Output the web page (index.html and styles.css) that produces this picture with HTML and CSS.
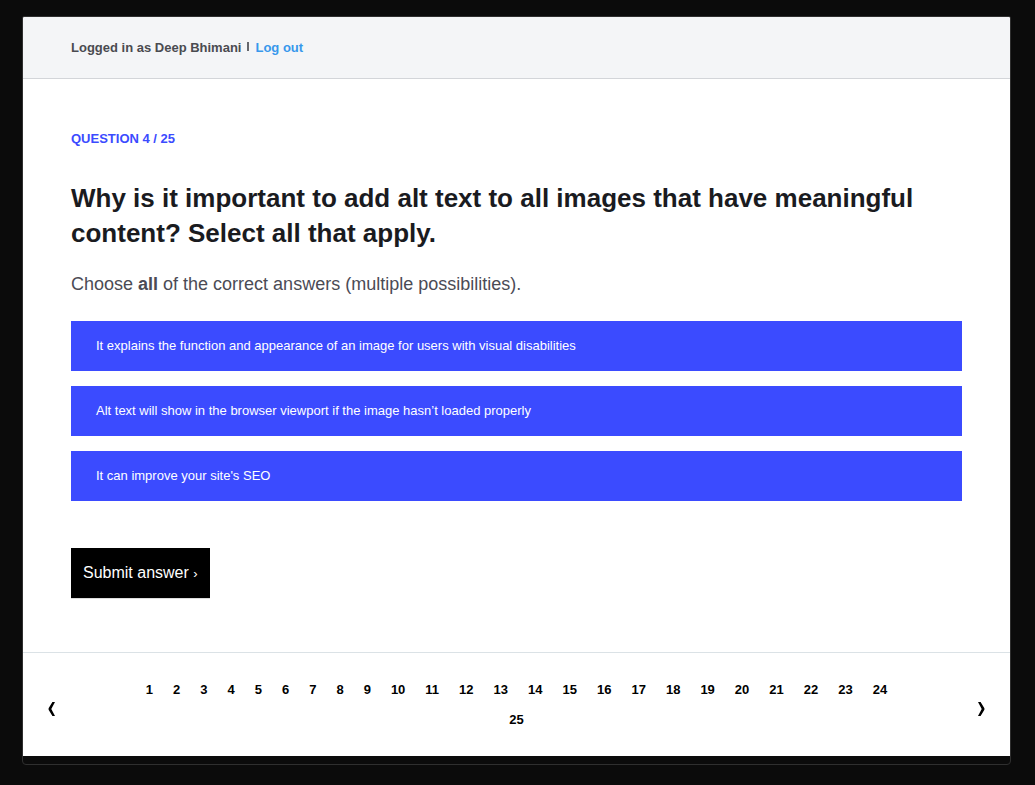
FILE: index.html
```html
<!DOCTYPE html>
<html lang="en">
<head>
<meta charset="utf-8">
<meta name="viewport" content="width=device-width, initial-scale=1">
<title>Question 4 / 25</title>
<link rel="stylesheet" href="styles.css">
</head>
<body>
<div class="frame">
  <header class="account">
    <span>Logged in as Deep Bhimani</span>
    <span class="divider"></span>
    <a href="#logout">Log out</a>
  </header>
  <main class="question">
    <p class="progress">QUESTION 4 / 25</p>
    <h1 class="title">Why is it important to add alt text to all images that have meaningful content? Select all that apply.</h1>
    <p class="hint">Choose <strong>all</strong> of the correct answers (multiple possibilities).</p>
    <div class="answers">
      <button type="button" class="answer" aria-pressed="false">It explains the function and appearance of an image for users with visual disabilities</button>
      <button type="button" class="answer" aria-pressed="false">Alt text will show in the browser viewport if the image hasn’t loaded properly</button>
      <button type="button" class="answer" aria-pressed="false">It can improve your site's SEO</button>
    </div>
    <button type="submit" class="submit">Submit answer <span class="chevron">›</span></button>
  </main>
  <nav class="pager" aria-label="Questions">
    <a class="arrow arrow-prev" href="#previous" aria-label="Previous question"><svg viewBox="0 0 8 14" width="8" height="14"><path d="M4.4 0H7L3.3 7 7 14H4.4L.6 7.8V6.2Z"/></svg></a>
    <div class="pages">
      <a href="#q1">1</a><a href="#q2">2</a><a href="#q3">3</a><a href="#q4" aria-current="page">4</a><a href="#q5">5</a><a href="#q6">6</a><a href="#q7">7</a><a href="#q8">8</a><a href="#q9">9</a><a href="#q10">10</a><a href="#q11">11</a><a href="#q12">12</a><a href="#q13">13</a><a href="#q14">14</a><a href="#q15">15</a><a href="#q16">16</a><a href="#q17">17</a><a href="#q18">18</a><a href="#q19">19</a><a href="#q20">20</a><a href="#q21">21</a><a href="#q22">22</a><a href="#q23">23</a><a href="#q24">24</a><a href="#q25">25</a>
    </div>
    <a class="arrow arrow-next" href="#next" aria-label="Next question"><svg viewBox="0 0 8 14" width="8" height="14"><path d="M3.6 0H1L4.7 7 1 14H3.6L7.4 7.8V6.2Z"/></svg></a>
  </nav>
</div>
</body>
</html>
```

FILE: styles.css
```css
* {
  box-sizing: border-box;
}

body {
  margin: 0;
  padding: 16px 24px 20px 22px;
  background: #0b0b0b;
  color: #4b4b55;
  font-family: "Liberation Sans", Arial, sans-serif;
}

button {
  border: 0;
  font-family: inherit;
  cursor: pointer;
}

a {
  text-decoration: none;
}

.frame {
  padding-bottom: 8px;
  border: 1px solid #2f2f2f;
  border-radius: 2px 2px 4px 4px;
  overflow: hidden;
}

.account {
  display: flex;
  align-items: center;
  gap: 6px;
  padding: 22px 48px 21px;
  border-bottom: 1px solid #d3d5d9;
  background: #f4f5f7;
  color: #4a4b50;
  font-size: 13px;
  font-weight: bold;
  line-height: 18px;
}

.account a {
  color: #3898ec;
}

.divider {
  width: 2px;
  height: 9px;
  margin-bottom: 3px;
  background: #66676c;
}

.question {
  padding: 49px 48px 54px;
  background: #fff;
}

.progress {
  margin: 0 0 31px;
  color: #3b4bff;
  font-size: 13px;
  font-weight: bold;
  line-height: 22px;
}

.title {
  margin: 0 0 22px;
  color: #1a1b1f;
  font-size: 26px;
  line-height: 35px;
}

.hint {
  margin: 0 0 26px;
  color: #4b4b55;
  font-size: 18px;
  line-height: 22px;
}

.answers {
  display: grid;
  gap: 15px;
  margin-bottom: 47px;
}

.answer {
  min-height: 50px;
  padding: 10px 25px;
  background: #3b4bff;
  color: #fff;
  font-size: 13px;
  line-height: 20px;
  text-align: left;
}

.submit {
  display: block;
  min-height: 50px;
  padding: 10px 12px;
  background: #000;
  box-shadow: 0 1px 0 #ddd;
  color: #fff;
  font-size: 16px;
  line-height: 20px;
}

.chevron {
  font-size: 13px;
}

.pager {
  display: flex;
  align-items: center;
  padding: 22px 0 21px;
  border-top: 1px solid #dbe2e6;
  background: #fff;
}

.arrow {
  display: flex;
  flex: 0 0 100px;
  padding: 8px 25px 0;
}

.arrow-next {
  justify-content: flex-end;
}

.pages {
  display: flex;
  flex: 1;
  flex-wrap: wrap;
  justify-content: center;
}

.pages a {
  padding: 0 10px;
  color: #000;
  font-size: 13px;
  font-weight: bold;
  line-height: 30px;
}
```
